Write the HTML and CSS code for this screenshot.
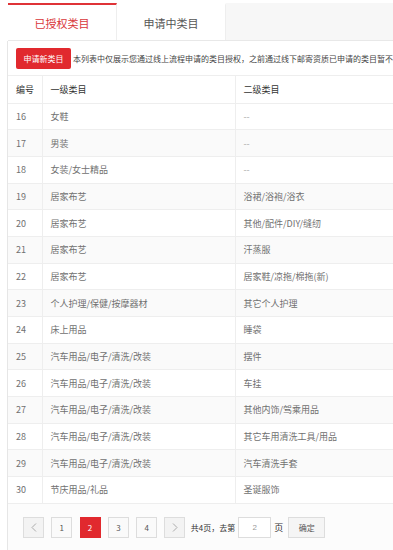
FILE: index.html
```html
<!DOCTYPE html>
<html lang="zh-CN">
<head>
    <meta charset="UTF-8">
    <meta name="viewport" content="width=device-width, initial-scale=1.0">
    <title>类目管理</title>
    <link rel="stylesheet" href="styles.css">
</head>
<body>

    <div class="wrap">
        <div class="tabs">
            <div class="tab active">已授权类目</div>
            <div class="tab">申请中类目</div>
        </div>

        <div class="panel">
            <div class="toolbar">
                <button class="btn-apply">申请新类目</button>
                <span class="notice">本列表中仅展示您通过线上流程申请的类目授权，之前通过线下邮寄资质已申请的类目暂不在此展示</span>
            </div>

            <table class="list">
                <thead>
                    <tr>
                        <th class="col-no">编号</th>
                        <th class="col-first">一级类目</th>
                        <th class="col-second">二级类目</th>
                    </tr>
                </thead>
                <tbody>
                    <tr><td>16</td><td>女鞋</td><td class="empty">--</td></tr>
                    <tr><td>17</td><td>男装</td><td class="empty">--</td></tr>
                    <tr><td>18</td><td>女装/女士精品</td><td class="empty">--</td></tr>
                    <tr><td>19</td><td>居家布艺</td><td>浴裙/浴袍/浴衣</td></tr>
                    <tr><td>20</td><td>居家布艺</td><td>其他/配件/DIY/缝纫</td></tr>
                    <tr><td>21</td><td>居家布艺</td><td>汗蒸服</td></tr>
                    <tr><td>22</td><td>居家布艺</td><td>居家鞋/凉拖/棉拖(新)</td></tr>
                    <tr><td>23</td><td>个人护理/保健/按摩器材</td><td>其它个人护理</td></tr>
                    <tr><td>24</td><td>床上用品</td><td>睡袋</td></tr>
                    <tr><td>25</td><td>汽车用品/电子/清洗/改装</td><td>摆件</td></tr>
                    <tr><td>26</td><td>汽车用品/电子/清洗/改装</td><td>车挂</td></tr>
                    <tr><td>27</td><td>汽车用品/电子/清洗/改装</td><td>其他内饰/驾乘用品</td></tr>
                    <tr><td>28</td><td>汽车用品/电子/清洗/改装</td><td>其它车用清洗工具/用品</td></tr>
                    <tr><td>29</td><td>汽车用品/电子/清洗/改装</td><td>汽车清洗手套</td></tr>
                    <tr><td>30</td><td>节庆用品/礼品</td><td>圣诞服饰</td></tr>
                </tbody>
            </table>

            <div class="pager">
                <a class="page arrow">
                    <svg width="6" height="9" viewBox="0 0 6 9"><path d="M5 0.5 L1 4.5 L5 8.5" fill="none" stroke="#aaa" stroke-width="1"/></svg>
                </a>
                <a class="page">1</a>
                <a class="page current">2</a>
                <a class="page">3</a>
                <a class="page">4</a>
                <a class="page arrow">
                    <svg width="6" height="9" viewBox="0 0 6 9"><path d="M1 0.5 L5 4.5 L1 8.5" fill="none" stroke="#aaa" stroke-width="1"/></svg>
                </a>
                <span class="total">共4页，去第</span>
                <input type="text" class="goto" value="2">
                <span class="unit">页</span>
                <button class="btn-go">确定</button>
            </div>
        </div>
    </div>

</body>
</html>
```

FILE: styles.css
```css
body {
    font-family: "Noto Sans CJK SC", "Open Sans", sans-serif;
    background-color: #fff;
    color: #333;
    margin: 0;
    overflow: hidden;
}
.wrap {
    width: 620px;
    padding: 3px 0 0 7px;
}
.tabs {
    display: flex;
    height: 37px;
    background-color: #f7f7f7;
    border-bottom: 1px solid #e8e8e8;
    margin-left: 1px;
}
.tab {
    width: 108px;
    background-color: #fff;
    border-right: 1px solid #eee;
    border-top: 2px solid transparent;
    display: flex;
    align-items: center;
    justify-content: center;
    font-size: 11px;
    color: #555;
}
.tab.active {
    color: #d9363a;
    border-top-color: #df3337;
}
.panel {
    border-left: 1px solid #e6e6e6;
    background-color: #fff;
}
.toolbar {
    display: flex;
    align-items: center;
    gap: 2px;
    padding: 7px 8px 6px;
    border-bottom: 1px solid #eee;
    white-space: nowrap;
}
.btn-apply {
    width: 55px;
    height: 21px;
    padding: 0;
    border: none;
    border-radius: 2px;
    background-color: #e1292e;
    color: #fff;
    font-family: inherit;
    font-size: 8px;
}
.notice {
    font-size: 8px;
    color: #444;
}
.list {
    width: 100%;
    border-collapse: collapse;
    table-layout: fixed;
}
.list th,
.list td {
    height: 26.7px;
    padding: 0 8px;
    text-align: left;
    font-size: 9px;
    font-weight: normal;
    border-bottom: 1px solid #eee;
    border-left: 1px solid #eee;
    box-sizing: border-box;
    white-space: nowrap;
}
.list th:first-child,
.list td:first-child {
    border-left: none;
}
.list th {
    color: #333;
    height: 27px;
}
.list td {
    color: #707070;
}
.list td.empty {
    color: #aaa;
}
.list tbody tr:nth-child(even) {
    background-color: #fafafa;
}
.col-no {
    width: 34px;
}
.col-first {
    width: 193px;
}
.pager {
    display: flex;
    align-items: center;
    padding: 13px 15px 14px;
    background-color: #fcfcfc;
}
.page {
    width: 21px;
    height: 21px;
    margin-right: 7.3px;
    box-sizing: border-box;
    border: 1px solid #ddd;
    background-color: #fafafa;
    color: #555;
    font-size: 8px;
    display: flex;
    align-items: center;
    justify-content: center;
}
.page.arrow {
    background-color: #f3f3f3;
}
.page.current {
    background-color: #e1292e;
    border-color: #e1292e;
    color: #fff;
}
.total {
    font-size: 8px;
    color: #333;
    margin-left: -2px;
}
.goto {
    width: 33px;
    height: 21px;
    box-sizing: border-box;
    margin-left: 3px;
    border: 1px solid #ddd;
    text-align: center;
    font-size: 8px;
    color: #999;
    padding: 0;
}
.unit {
    font-size: 9px;
    margin: 0 5px 0 3px;
}
.btn-go {
    width: 37px;
    height: 21px;
    padding: 0;
    border: 1px solid #ddd;
    background-color: #f5f5f5;
    font-family: inherit;
    font-size: 8px;
    color: #555;
}
```
